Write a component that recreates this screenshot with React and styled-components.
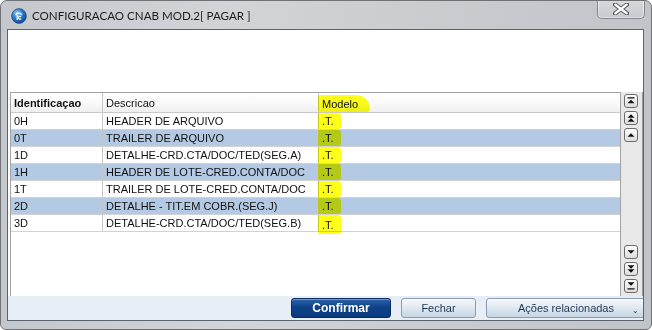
import React from 'react';
import styled, { createGlobalStyle } from 'styled-components';

const GlobalStyle = createGlobalStyle`
    html, body {
        margin: 0;
        padding: 0;
        background: #ffffff;
    }
    * {
        box-sizing: border-box;
    }
`;

const Window = styled.div`
    width: 652px;
    height: 330px;
    display: flex;
    flex-direction: column;
    border: 1px solid #6f7378;
    border-radius: 7px 7px 6px 6px;
    background: linear-gradient(to right, #c4c7cc 0%, #d2d4d8 35%, #cbcdd1 60%, #c1c4c9 100%);
    overflow: hidden;
    font-family: 'Liberation Sans', Arial, sans-serif;
`;

const TitleBar = styled.div`
    height: 28px;
    flex: none;
    display: flex;
    align-items: flex-start;
    padding-left: 10px;
`;

const AppIcon = styled.svg`
    width: 16px;
    height: 16px;
    margin-top: 7px;
    flex: none;
`;

const Title = styled.div`
    margin: 7px 0 0 5px;
    font-family: 'Lato', 'Liberation Sans', sans-serif;
    font-size: 11.6px;
    line-height: 16px;
    color: #1b1b1b;
    white-space: nowrap;
`;

const CloseButton = styled.div`
    margin-left: auto;
    margin-right: 6px;
    margin-top: -1px;
    width: 48px;
    height: 19px;
    display: flex;
    align-items: center;
    justify-content: center;
    border: 1px solid #85888d;
    border-top: none;
    border-radius: 0 0 5px 5px;
    background: linear-gradient(to bottom, #d8dade, #c6c9cd);
    box-shadow: inset 0 0 0 1px rgba(255, 255, 255, 0.45);
`;

const Client = styled.div`
    flex: 1;
    margin: 0 7px 8px 6px;
    display: flex;
    flex-direction: column;
    border: 1px solid #5b646e;
    background: #ffffff;
    overflow: hidden;
`;

const Body = styled.div`
    flex: 1;
    display: flex;
    flex-direction: column;
    padding: 62px 0 0 2px;
    background: #ffffff;
`;

const GridArea = styled.div`
    flex: 1;
    display: flex;
`;

const Grid = styled.div`
    flex: 1;
    border: 1px solid #a3a3a3;
    border-bottom: none;
    background: #ffffff;
`;

const Row = styled.div`
    display: grid;
    grid-template-columns: 92px 216px 1fr;
    height: ${(p) => (p.$header ? '20px' : '17px')};
    background: ${(p) =>
        p.$header
            ? 'linear-gradient(to bottom, #ffffff 0%, #fafafa 50%, #efefef 100%)'
            : p.$alt
            ? '#b4cae4'
            : '#ffffff'};
    border-bottom: 1px solid ${(p) => (p.$header ? '#c9c9c9' : '#d2d2d2')};
`;

const Cell = styled.div`
    display: flex;
    align-items: center;
    padding-left: 3px;
    border-right: 1px solid #c6c6c6;
    font-size: 11px;
    font-weight: ${(p) => (p.$bold ? 'bold' : 'normal')};
    color: #111111;
    white-space: nowrap;
    overflow: hidden;
    &:last-child {
        border-right: none;
    }
`;

const ModelCell = styled.div`
    display: flex;
    align-items: stretch;
    font-size: 11px;
    color: #111111;
    white-space: nowrap;
`;

const Marker = styled.span`
    display: flex;
    align-items: center;
    width: ${(p) => (p.$header ? '52px' : '23px')};
    margin-left: -1px;
    padding-left: 4px;
    background: #ffff1a;
    mix-blend-mode: multiply;
    border-radius: ${(p) => (p.$header ? '2px 14px 3px 2px' : '0 3px 3px 0')};
    margin-top: ${(p) => (p.$header ? '2px' : '0')};
    margin-bottom: ${(p) => (p.$last ? '-3px' : '0')};
`;

const ScrollRail = styled.div`
    width: 22px;
    flex: none;
    display: flex;
    flex-direction: column;
    gap: 3px;
    padding: 2px 0 3px 3px;
    background: #e8e8e8;
    border-right: 1px solid #9a9a9a;
`;

const ScrollButton = styled.div`
    width: 14px;
    height: 14px;
    border: 1px solid #6c6c6c;
    border-radius: 3px;
    background: linear-gradient(to bottom, #fdfdfd, #dcdcdc);
    display: flex;
    align-items: center;
    justify-content: center;
    margin-top: ${(p) => (p.$push ? 'auto' : '0')};
`;

const Footer = styled.div`
    height: 24px;
    flex: none;
    display: flex;
    align-items: center;
    justify-content: flex-end;
    gap: 10px;
    background: #e8eef5;
    overflow: hidden;
`;

const Button = styled.div`
    position: relative;
    height: 20px;
    width: ${(p) => p.$width}px;
    margin-right: ${(p) => p.$overhang || 0}px;
    flex: none;
    display: flex;
    align-items: center;
    justify-content: center;
    border-radius: 3px;
    font-size: ${(p) => (p.$primary ? '12px' : '11px')};
    font-weight: ${(p) => (p.$primary ? 'bold' : 'normal')};
    color: ${(p) => (p.$primary ? '#ffffff' : '#1f3753')};
    border: 1px solid ${(p) => (p.$primary ? '#0a2c63' : '#8b9cb1')};
    background: ${(p) =>
        p.$primary
            ? 'linear-gradient(to bottom, #2d62a8 0%, #0e4289 45%, #0a3a7c 100%)'
            : 'linear-gradient(to bottom, #f6f9fc 0%, #dfe8f1 50%, #c6d5e5 100%)'};
    box-shadow: inset 0 1px 0 rgba(255, 255, 255, 0.35);
`;

const DropArrow = styled.span`
    position: absolute;
    right: 6px;
    bottom: 2px;
    font-size: 8px;
    line-height: 8px;
    color: #1f3753;
`;

const rows = [
    ['0H', 'HEADER DE ARQUIVO'],
    ['0T', 'TRAILER DE ARQUIVO'],
    ['1D', 'DETALHE-CRD.CTA/DOC/TED(SEG.A)'],
    ['1H', 'HEADER DE LOTE-CRED.CONTA/DOC'],
    ['1T', 'TRAILER DE LOTE-CRED.CONTA/DOC'],
    ['2D', 'DETALHE - TIT.EM COBR.(SEG.J)'],
    ['3D', 'DETALHE-CRD.CTA/DOC/TED(SEG.B)'],
];

function Arrow({ kind }) {
    // triangles drawn in a 10x10 box
    const up = (y) => `M5 ${y}L8.5 ${y + 3.5}H1.5Z`;
    const down = (y) => `M1.5 ${y}H8.5L5 ${y + 3.5}Z`;
    let d = '';
    if (kind === 'first') d = `M1.5 1.2H8.5V2.6H1.5Z ${up(3.8)}`;
    if (kind === 'pageUp') d = `${up(1.2)} ${up(5.2)}`;
    if (kind === 'up') d = up(3.2);
    if (kind === 'down') d = down(3.2);
    if (kind === 'pageDown') d = `${down(1.2)} ${down(5.2)}`;
    if (kind === 'last') d = `${down(1.2)} M1.5 7.2H8.5V8.6H1.5Z`;
    return (
        <svg width="10" height="10" viewBox="0 0 10 10">
            <path d={d} fill="#111" />
        </svg>
    );
}

export default function App() {
    return (
        <>
            <GlobalStyle />
            <Window>
                <TitleBar>
                    <AppIcon viewBox="0 0 16 16">
                        <defs>
                            <radialGradient id="globe" cx="0.38" cy="0.32" r="0.75">
                                <stop offset="0" stopColor="#9fd2ff" />
                                <stop offset="0.45" stopColor="#2f7fd0" />
                                <stop offset="1" stopColor="#0b3f86" />
                            </radialGradient>
                        </defs>
                        <circle cx="8" cy="8" r="7.4" fill="url(#globe)" stroke="#17406f" strokeWidth="0.6" />
                        <path d="M5 6.2c1.6-1.4 4.4-1.3 5.6 0.3" stroke="#fff" strokeWidth="1.3" fill="none" strokeLinecap="round" />
                        <path d="M6.2 7.4v4.2M9.6 8.6c-0.9-0.6-2.2 0-2 1.4c0.1 1.2 1.3 1.5 2.1 1" stroke="#fff" strokeWidth="1.2" fill="none" strokeLinecap="round" />
                    </AppIcon>
                    <Title>CONFIGURACAO CNAB MOD.2[ PAGAR ]</Title>
                    <CloseButton>
                        <svg width="16" height="12" viewBox="0 0 16 12">
                            <path
                                d="M2 1.5L14 10.5M14 1.5L2 10.5"
                                stroke="#4d5157"
                                strokeWidth="4.2"
                                strokeLinecap="round"
                                fill="none"
                            />
                            <path d="M2.4 1.8L13.6 10.2M13.6 1.8L2.4 10.2" stroke="#ffffff" strokeWidth="2.4" strokeLinecap="round" />
                        </svg>
                    </CloseButton>
                </TitleBar>
                <Client>
                    <Body>
                        <GridArea>
                            <Grid>
                                <Row $header>
                                    <Cell $bold>Identificaçao</Cell>
                                    <Cell>Descricao</Cell>
                                    <ModelCell>
                                        <Marker $header>Modelo</Marker>
                                    </ModelCell>
                                </Row>
                                {rows.map(([id, desc], i) => (
                                    <Row key={id} $alt={i % 2 === 1}>
                                        <Cell>{id}</Cell>
                                        <Cell>{desc}</Cell>
                                        <ModelCell>
                                            <Marker $last={i === rows.length - 1}>.T.</Marker>
                                        </ModelCell>
                                    </Row>
                                ))}
                            </Grid>
                            <ScrollRail>
                                <ScrollButton><Arrow kind="first" /></ScrollButton>
                                <ScrollButton><Arrow kind="pageUp" /></ScrollButton>
                                <ScrollButton><Arrow kind="up" /></ScrollButton>
                                <ScrollButton $push><Arrow kind="down" /></ScrollButton>
                                <ScrollButton><Arrow kind="pageDown" /></ScrollButton>
                                <ScrollButton><Arrow kind="last" /></ScrollButton>
                            </ScrollRail>
                        </GridArea>
                    </Body>
                    <Footer>
                        <Button $primary $width={100}>Confirmar</Button>
                        <Button $width={75}>Fechar</Button>
                        <Button $width={160} $overhang={-3}>
                            Ações relacionadas
                            <DropArrow>⌄</DropArrow>
                        </Button>
                    </Footer>
                </Client>
            </Window>
        </>
    );
}
